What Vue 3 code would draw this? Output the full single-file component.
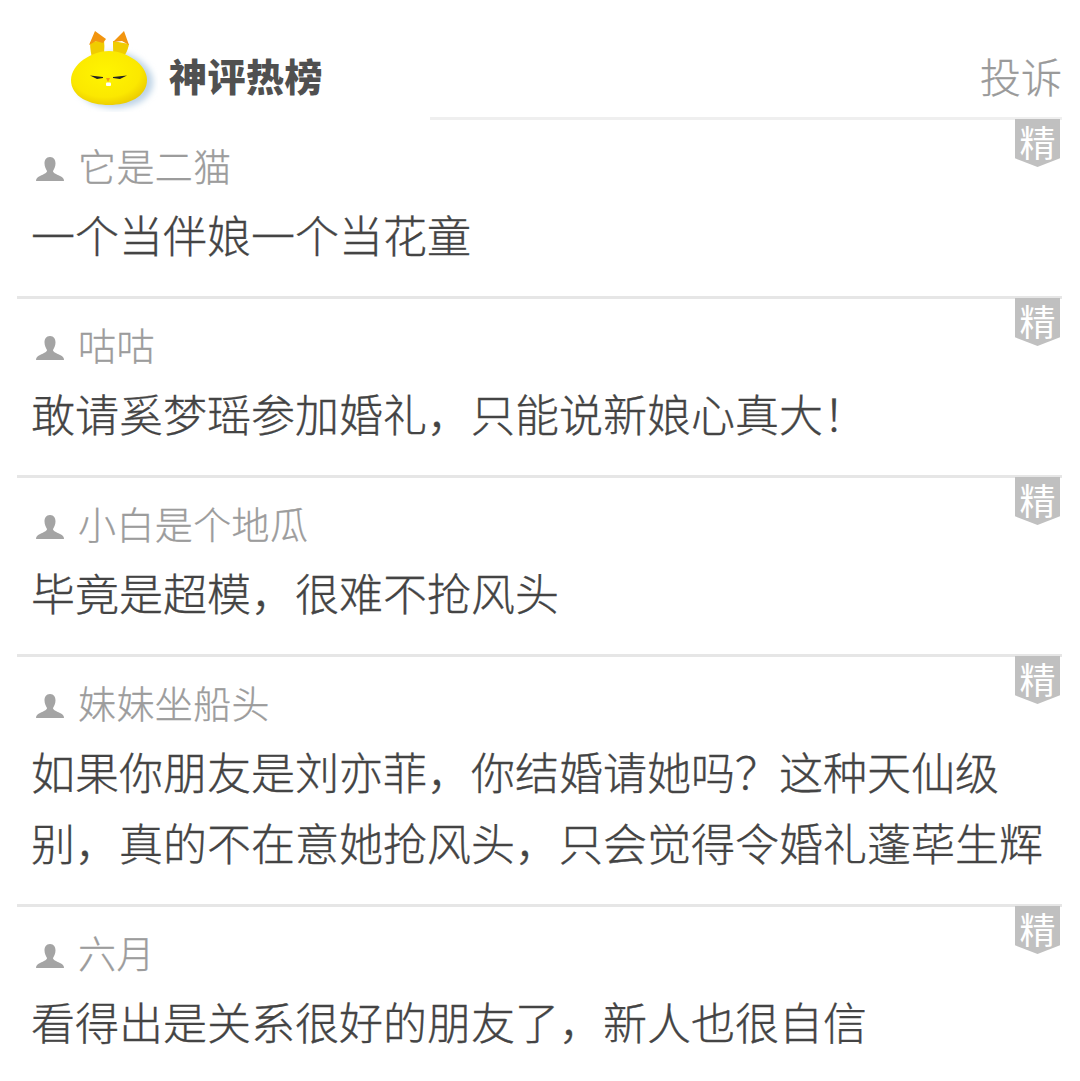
<script setup>
const rows = [
  { name: '它是二猫', lines: ['一个当伴娘一个当花童'] },
  { name: '咕咕', lines: ['敢请奚梦瑶参加婚礼，只能说新娘心真大！'] },
  { name: '小白是个地瓜', lines: ['毕竟是超模，很难不抢风头'] },
  { name: '妹妹坐船头', lines: ['如果你朋友是刘亦菲，你结婚请她吗？这种天仙级', '别，真的不在意她抢风头，只会觉得令婚礼蓬荜生辉'] },
  { name: '六月', lines: ['看得出是关系很好的朋友了，新人也很自信'] },
]
</script>

<template>
  <div class="page">
    <header class="head">
      <div class="brand">
        <svg class="rabbit" width="92" height="84" viewBox="0 0 92 84">
          <defs>
            <radialGradient id="body" cx="0.45" cy="0.4" r="0.65">
              <stop offset="0" stop-color="#fff500" />
              <stop offset="0.7" stop-color="#fbe800" />
              <stop offset="1" stop-color="#e9c800" />
            </radialGradient>
            <filter id="soft" x="-20%" y="-20%" width="140%" height="140%">
              <feGaussianBlur stdDeviation="3" />
            </filter>
          </defs>
          <path d="M11 54 C11 38 32 24 49 24 C66 24 87 38 87 54 C87 71 68 80 49 80 C30 80 11 71 11 54 Z" fill="#bdd3e6" filter="url(#soft)" />
          <path d="M24 14 L38 12 C39 20 38 28 36 34 L27 34 C25 27 24 20 24 14 Z" fill="#f0cc00" />
          <path d="M47 13 L63 16 C62 23 58 29 54 33 L48 32 C47 25 47 19 47 13 Z" fill="#f0cc00" />
          <path d="M23 17 L29 3 L40 11 L37 15 L30 13 Z" fill="#f2950f" />
          <path d="M47 14 L58 3 L63 17 L56 13 Z" fill="#f2950f" />
          <path d="M5 52 C5 36 26 23 43 23 C60 23 81 36 81 52 C81 69 62 77 43 77 C24 77 5 69 5 52 Z" fill="url(#body)" />
          <path d="M24 47.500 L37 49 L37 50 L31 51 Z" fill="#222" />
          <path d="M61 47.500 L47 49 L47 50 L54 51 Z" fill="#222" />
          <path d="M40 50 L44 50 L42 54 Z" fill="#f39a12" />
          <rect x="40" y="54.500" width="5" height="3.500" rx="1" fill="#fff" />
        </svg>
        <span class="title">神评热榜</span>
      </div>
      <span class="report">投诉</span>
    </header>
    <div class="head-rule"></div>
    <section v-for="row in rows" :key="row.name" class="row">
      <div class="badge">精</div>
      <div class="user">
        <svg class="avatar" width="30" height="26" viewBox="0 0 30 26">
          <path d="M15 1 C19 1 20.500 4 20.500 7.500 C20.500 11 19 13 18 15 C18 17 21 18 25 20 C28 21 29 23 29 25 L1 25 C1 23 2 21 5 20 C9 18 12 17 12 15 C11 13 9.500 11 9.500 7.500 C9.500 4 11 1 15 1 Z" fill="#a4a4a4" />
        </svg>
        <span class="name">{{ row.name }}</span>
      </div>
      <div class="text">
        <div v-for="line in row.lines" :key="line" class="line">{{ line }}</div>
      </div>
    </section>
  </div>
</template>

<style>
html, body { margin: 0; background: #fff; }
</style>

<style scoped>
.page {
  width: 1080px;
  height: 1081px;
  overflow: hidden;
  background: #fff;
  font-family: "Noto Sans CJK SC", "Noto Sans", sans-serif;
}
.head {
  display: flex;
  align-items: flex-start;
  justify-content: space-between;
  height: 119px;
  box-sizing: border-box;
  padding: 28px 18px 0 66px;
}
.brand {
  display: flex;
  align-items: center;
  gap: 11px;
}
.rabbit { display: block; }
.title {
  font-size: 38px;
  letter-spacing: 0.5px;
  line-height: 44px;
  font-weight: 900;
  color: #505050;
  white-space: nowrap;
  margin-top: 10px;
}
.report {
  font-size: 41px;
  line-height: 50px;
  font-weight: 300;
  -webkit-text-stroke: 0.3px #9a9a9a;
  color: #9a9a9a;
  margin-top: 22px;
}
.head-rule {
  height: 3px;
  margin: -2px 18px 0 430px;
  background: #efefef;
}
.row {
  position: relative;
  margin: 0 18px 0 17px;
  box-sizing: border-box;
  padding: 20px 0 26px 14px;
  border-bottom: 3px solid #e6e6e6;
}
.row:last-child { border-bottom: none; }
.badge {
  position: absolute;
  top: -1px;
  right: 2px;
  width: 45px;
  height: 48px;
  box-sizing: border-box;
  padding-top: 1px;
  background: #c0c0c0;
  color: #fff;
  font-size: 36px;
  font-weight: 400;
  line-height: 42px;
  text-align: center;
  clip-path: polygon(0 0, 100% 0, 100% 82%, 50% 100%, 0 82%);
}
.user {
  display: flex;
  align-items: center;
  gap: 13px;
  height: 50px;
}
.avatar { display: block; margin-left: 4px; margin-top: 8px; }
.name {
  font-size: 38px;
  font-weight: 300;
  -webkit-text-stroke: 0.3px #9c9c9c;
  letter-spacing: 0.4px;
  line-height: 50px;
  color: #9c9c9c;
  white-space: nowrap;
}
.text { margin-top: 9px; }
.line {
  font-size: 44px;
  font-weight: 300;
  -webkit-text-stroke: 0.35px #444;
  line-height: 71px;
  color: #444;
  white-space: nowrap;
}
</style>
